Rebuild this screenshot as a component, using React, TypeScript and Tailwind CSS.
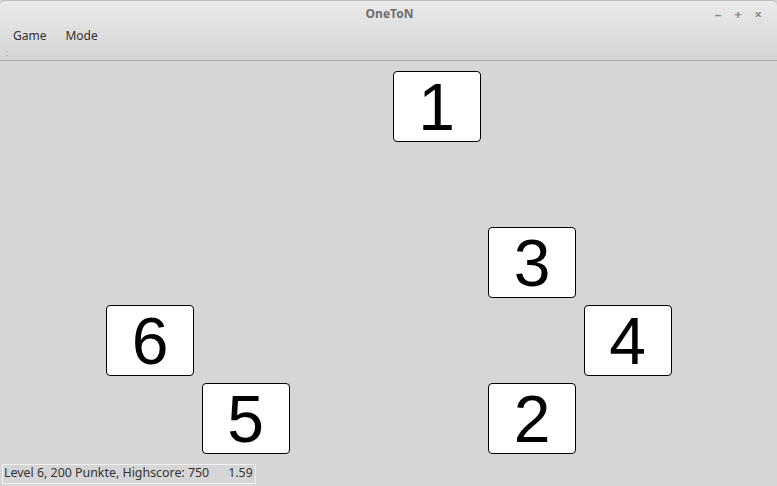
import React from "react"

const cards = [
  { n: 1, col: "col-start-5", row: "row-start-1" },
  { n: 3, col: "col-start-6", row: "row-start-3" },
  { n: 6, col: "col-start-2", row: "row-start-4" },
  { n: 4, col: "col-start-7", row: "row-start-4" },
  { n: 5, col: "col-start-3", row: "row-start-5" },
  { n: 2, col: "col-start-6", row: "row-start-5" },
]

export default function App() {
  return (
    <div
      className="w-[777px] h-[486px] flex flex-col bg-[#d6d6d6] overflow-hidden"
      style={{ fontFamily: "'Noto Sans', 'DejaVu Sans', sans-serif" }}
    >
      {/* title + menu share one gradient */}
      <div className="h-[61px] flex flex-col rounded-t-[5px] border-t border-[#bdbdbd] border-b border-b-[#a9a9a9] bg-gradient-to-b from-[#eaeaea] to-[#d4d4d4]">
        <div className="h-[25px] flex items-center relative">
          <div className="flex-1 text-center text-[12px] font-bold text-[#6e6e6e] pl-[2px]">OneToN</div>
          <div className="absolute right-[15px] top-[4px] flex gap-[13px] text-[13px] text-[#8a8a8a] font-bold">
            <span>–</span>
            <span>+</span>
            <span>×</span>
          </div>
        </div>
        <div className="flex items-center h-[20px] pl-[13px] gap-[19px] text-[12px] text-[#333333]">
          <span>Game</span>
          <span>Mode</span>
        </div>
        <div className="pl-[6px] leading-none text-[8px] text-[#9a9a9a] mt-[3px]">:</div>
      </div>

      <div className="flex-1 pt-[10px] pl-[10.5px]">
        <div className="grid grid-cols-[repeat(8,88px)] grid-rows-[repeat(5,71px)] gap-x-[7.5px] gap-y-[7px]">
          {cards.map((c) => (
            <div
              key={c.n}
              className={`${c.col} ${c.row} bg-white border border-black rounded-[4px] flex items-center justify-center text-[66px] leading-none text-black`}
              style={{ fontFamily: "'Liberation Sans', Arial, sans-serif" }}
            >
              {c.n}
            </div>
          ))}
        </div>
      </div>

      <div className="h-[24px] flex items-center pl-[2px] pb-[1px]">
        <div className="h-[20px] w-[254px] flex items-center border border-[#f2f2f2] pl-[1px] text-[12.4px] text-[#333333]">
          <span>Level 6, 200 Punkte, Highscore: 750</span>
          <span className="ml-[19px]">1.59</span>
        </div>
      </div>
    </div>
  )
}
